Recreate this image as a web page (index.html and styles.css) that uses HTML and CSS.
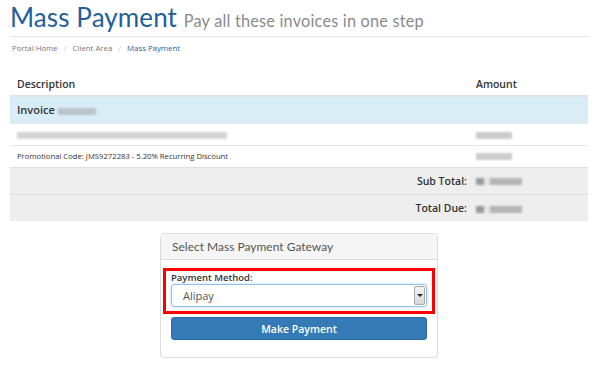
FILE: index.html
```html
<!DOCTYPE html>
<html lang="en">
<head>
    <meta charset="UTF-8">
    <title>Mass Payment</title>
    <link rel="stylesheet" href="styles.css">
</head>
<body>
    <div class="container">
        <!-- Page header -->
        <div class="page-header">
            <h1>Mass Payment <small>Pay all these invoices in one step</small></h1>
        </div>

        <ol class="breadcrumb">
            <li><a href="#">Portal Home</a></li>
            <li><a href="#">Client Area</a></li>
            <li class="active">Mass Payment</li>
        </ol>

        <!-- Invoice table -->
        <table class="invoice-table">
            <thead>
                <tr>
                    <th>Description</th>
                    <th class="col-amount">Amount</th>
                </tr>
            </thead>
            <tbody>
                <tr class="row-invoice">
                    <td><strong>Invoice</strong> <span class="blur blur-num"></span></td>
                    <td></td>
                </tr>
                <tr>
                    <td><span class="blur blur-long"></span></td>
                    <td><span class="blur blur-amount"></span></td>
                </tr>
                <tr class="row-promo">
                    <td>Promotional Code: JMS9272283 - 5.20% Recurring Discount</td>
                    <td><span class="blur blur-amount"></span></td>
                </tr>
                <tr class="row-total">
                    <td class="total-label">Sub Total:</td>
                    <td><span class="blur blur-total"></span></td>
                </tr>
                <tr class="row-total">
                    <td class="total-label">Total Due:</td>
                    <td><span class="blur blur-total"></span></td>
                </tr>
            </tbody>
        </table>

        <!-- Gateway panel -->
        <div class="panel-wrap">
            <div class="panel">
                <div class="panel-heading">Select Mass Payment Gateway</div>
                <div class="panel-body">
                    <div class="highlight">
                        <label>Payment Method:</label>
                        <div class="select-box">
                            <span class="select-value">Alipay</span>
                            <span class="select-arrow"></span>
                        </div>
                    </div>
                    <button class="btn-pay">Make Payment</button>
                </div>
            </div>
        </div>
    </div>
</body>
</html>
```

FILE: styles.css
```css
/* Base */
* {
    margin: 0;
    padding: 0;
    box-sizing: border-box;
}

:root {
    --blue: #1f5f9b;
    --btn-blue: #337ab7;
    --text: #333333;
    --muted: #777777;
    --line: #dddddd;
}

body {
    font-family: "Open Sans", "Liberation Sans", sans-serif;
    color: var(--text);
    background: #ffffff;
}

.container {
    padding: 0 12px 0 10px;
}

/* Page header */
.page-header {
    border-bottom: 1px solid #e3e3e3;
    padding: 4px 0 6px;
}

.page-header h1 {
    font-family: Lato, "Liberation Sans", sans-serif;
    font-weight: 400;
    font-size: 26px;
    line-height: 26px;
    color: var(--blue);
    letter-spacing: 0.1px;
}

.page-header small {
    font-size: 16.3px;
    line-height: 1;
    color: #8a8a8a;
    letter-spacing: 0.2px;
}

/* Breadcrumb */
.breadcrumb {
    list-style: none;
    display: flex;
    font-size: 7.8px;
    padding: 6px 0 0 2px;
    height: 21px;
}

.breadcrumb li + li::before {
    content: "/";
    color: #c8c8c8;
    padding: 0 6px;
}

.breadcrumb a {
    color: var(--muted);
    text-decoration: none;
}

.breadcrumb .active {
    color: var(--blue);
}

/* Table */
.invoice-table {
    width: 100%;
    margin-top: 17px;
    border-collapse: collapse;
    font-size: 10px;
}

.invoice-table th {
    text-align: left;
    font-weight: 600;
    font-size: 10.5px;
    height: 21px;
    padding: 0 7px 4px;
    vertical-align: bottom;
    border-bottom: 2px solid #e2e2e2;
}

.invoice-table td {
    height: 22px;
    padding: 0 7px;
    border-top: 1px solid #e6e6e6;
    vertical-align: middle;
}

.invoice-table .col-amount,
.invoice-table td:last-child {
    width: 118px;
    padding-left: 6px;
}

.row-invoice td {
    background: #d9edf7;
    height: 27px;
    font-size: 11px;
}

.row-invoice strong {
    font-weight: 600;
}

.row-promo td {
    font-size: 7.7px;
}

.row-total td {
    background: #eeeeee;
    height: 27px;
    border-top: 1px solid #e0e0e0;
}

.invoice-table .total-label {
    text-align: right;
    font-weight: 600;
    font-size: 10.5px;
    padding-right: 3px;
}

/* Blurred values */
.blur {
    display: inline-block;
    height: 7px;
    vertical-align: middle;
    background: #c4c4c4;
    filter: blur(1px);
}

.blur-num {
    width: 38px;
    background: #b9c4ca;
}

.blur-long {
    width: 210px;
    background: #d4d4d4;
}

.blur-amount {
    width: 36px;
    background: #cbcbcb;
}

.blur-total {
    width: 46px;
    background: linear-gradient(90deg, #9a9a9a 0 8px, #e4e4e4 8px 14px, #b4b4b4 14px);
}

/* Panel */
.panel-wrap {
    display: flex;
    justify-content: center;
    padding-top: 12px;
}

.panel {
    width: 278px;
    border: 1px solid #dddddd;
    border-radius: 4px;
    box-shadow: 0 1px 1px rgba(0, 0, 0, 0.05);
}

.panel-heading {
    background: #f5f5f5;
    border-bottom: 1px solid #dddddd;
    border-radius: 3px 3px 0 0;
    height: 26px;
    padding: 0 11px;
    line-height: 25px;
    font-family: Lato, "Liberation Sans", sans-serif;
    font-size: 12px;
    color: #555555;
}

.panel-body {
    padding: 8px 2px 17px;
}

.highlight {
    border: 3px solid #ff0000;
    padding: 1px 5px 4px;
}

.highlight label {
    display: block;
    font-weight: 600;
    font-size: 9.5px;
    line-height: 11px;
    margin-bottom: 1px;
}

.select-box {
    display: flex;
    align-items: center;
    height: 23px;
    border: 1px solid #8fc1ea;
    border-radius: 3px;
    box-shadow: 0 0 3px rgba(102, 175, 233, 0.45);
    padding: 0 1px 0 11px;
}

.select-value {
    flex: 1;
    font-size: 11px;
    color: #555555;
}

.select-arrow {
    position: relative;
    width: 11px;
    height: 19px;
    border: 1px solid #a9a9a9;
    border-radius: 2px;
    background: linear-gradient(#f4f4f4, #d8d8d8);
}

.select-arrow::after {
    content: "";
    position: absolute;
    left: 2px;
    top: 7px;
    border-left: 3px solid transparent;
    border-right: 3px solid transparent;
    border-top: 3px solid #222222;
}

.btn-pay {
    display: block;
    width: calc(100% - 16px);
    margin: 3px 8px 0;
    height: 23px;
    border: 1px solid #2e6da4;
    border-radius: 3px;
    background: var(--btn-blue);
    color: #ffffff;
    font-family: "Open Sans", "Liberation Sans", sans-serif;
    font-weight: 600;
    font-size: 10.5px;
}
```
